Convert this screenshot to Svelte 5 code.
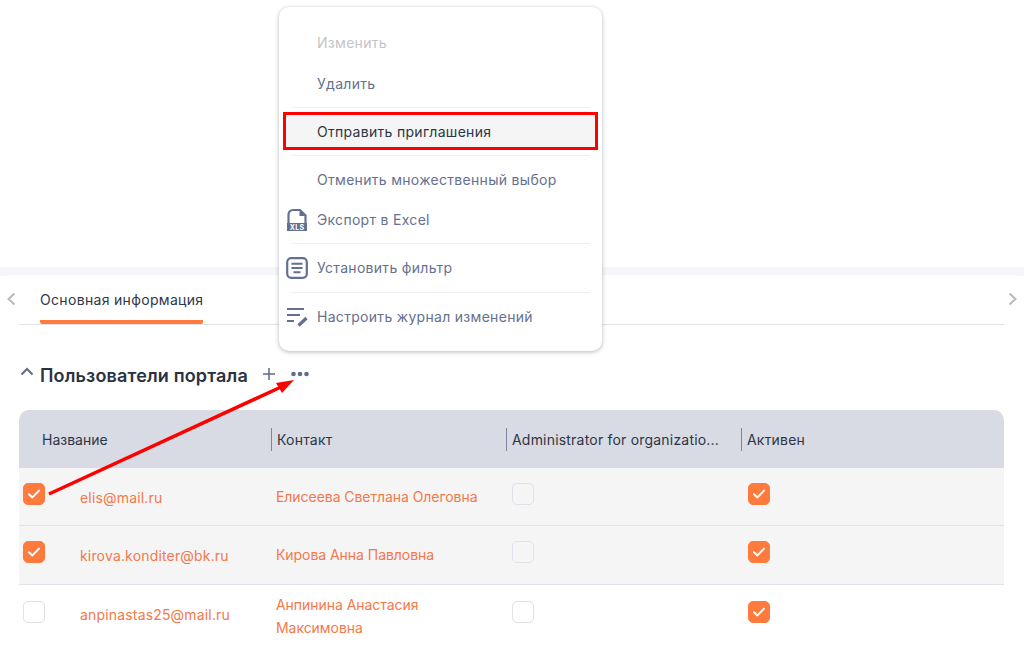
<script>
  const rows = [
    { email: 'elis@mail.ru', contact: ['Елисеева Светлана Олеговна'], checked: true, shade: true },
    { email: 'kirova.konditer@bk.ru', contact: ['Кирова Анна Павловна'], checked: true, shade: true },
    { email: 'anpinastas25@mail.ru', contact: ['Анпинина Анастасия', 'Максимовна'], checked: false, shade: false }
  ];
</script>

{#snippet box(on)}
  <span class="box" class:on>
    {#if on}
      <svg width="14" height="12" viewBox="0 0 14 12"><path d="M2 6.200 5.400 9.400 12 2.600" fill="none" stroke="#fff" stroke-width="2" stroke-linecap="round" stroke-linejoin="round"/></svg>
    {/if}
  </span>
{/snippet}

<div class="page">
  <div class="top"></div>
  <div class="strip"></div>
  <main class="card">
    <div class="tabs">
      <svg class="chev" width="12" height="16" viewBox="0 0 12 16"><path d="M9.500 2.500 3.500 8l6 5.500" fill="none" stroke="#b9b9bd" stroke-width="2"/></svg>
      <div class="tabline">
        <div class="tab">Основная информация</div>
      </div>
      <svg class="chev" width="12" height="16" viewBox="0 0 12 16"><path d="M2.500 2.500 8.500 8l-6 5.500" fill="none" stroke="#b9b9bd" stroke-width="2"/></svg>
    </div>

    <div class="section">
      <svg class="collapse" width="14" height="9" viewBox="0 0 14 9"><path d="M1.500 7.500 7 2l5.500 5.500" fill="none" stroke="#5f6b8a" stroke-width="2"/></svg>
      <h2>Пользователи портала</h2>
      <svg class="plus" width="14" height="14" viewBox="0 0 14 14"><path d="M7 1v12M1 7h12" stroke="#5f6b8a" stroke-width="1.500"/></svg>
      <svg class="dots" width="18" height="6" viewBox="0 0 18 6"><circle cx="2.500" cy="3" r="2.300" fill="#5f6b8a"/><circle cx="9" cy="3" r="2.300" fill="#5f6b8a"/><circle cx="15.500" cy="3" r="2.300" fill="#5f6b8a"/></svg>
    </div>

    <div class="table">
      <div class="row head">
        <div class="cell first">Название</div>
        <div class="cell sep">Контакт</div>
        <div class="cell sep">Administrator for organizatio...</div>
        <div class="cell sep">Активен</div>
      </div>
      {#each rows as r}
        <div class="row body" class:shade={r.shade}>
          <div class="cell name">
            <span class="slot">{@render box(r.checked)}</span>
            <span class="link email">{r.email}</span>
          </div>
          <div class="cell contact link">
            {#each r.contact as line}<div>{line}</div>{/each}
          </div>
          <div class="cell check">{@render box(false)}</div>
          <div class="cell check">{@render box(true)}</div>
        </div>
      {/each}
    </div>
  </main>

  <div class="menu">
    <div class="item disabled">Изменить</div>
    <div class="item second">Удалить</div>
    <hr class="h1" />
    <div class="item selected">Отправить приглашения</div>
    <hr class="h2" />
    <div class="item">Отменить множественный выбор</div>
    <div class="item">
      <svg class="ico" width="22" height="24" viewBox="0 0 22 24">
        <path d="M2.500 15V6.500A4.500 4.500 0 0 1 7 2h7l5.500 5.500V15" fill="none" stroke="#64708f" stroke-width="2.200"/>
        <path d="M13.500 2.500v5.500h6z" fill="#64708f"/>
        <rect x="1" y="15" width="20" height="8" fill="#64708f"/>
        <text x="11" y="21.700" text-anchor="middle" class="xls">XLS</text>
      </svg>
      Экспорт в Excel
    </div>
    <hr class="h3" />
    <div class="item">
      <svg class="ico" width="22" height="22" viewBox="0 0 22 22">
        <rect x="1.200" y="1.200" width="19.600" height="19.600" rx="4" fill="none" stroke="#64708f" stroke-width="2.200"/>
        <path d="M5.500 6.800h11M5.500 11h11M7.500 15.200h7" stroke="#64708f" stroke-width="2"/>
      </svg>
      Установить фильтр
    </div>
    <hr class="h4" />
    <div class="item">
      <svg class="ico" width="22" height="20" viewBox="0 0 22 20">
        <path d="M1 2h17M1 8h13M1 14h7" stroke="#64708f" stroke-width="2"/>
        <path d="M12.500 18.500 20.500 11" stroke="#64708f" stroke-width="3.200"/>
      </svg>
      Настроить журнал изменений
    </div>
  </div>

  <div class="redbox"></div>

  <svg class="arrow" width="1024" height="648" viewBox="0 0 1024 648">
    <path d="M49 494 281 387" stroke="#ff0000" stroke-width="3.500"/>
    <path d="M294 380 276 383 282 393z" fill="#ff0000"/>
  </svg>
</div>

<style>
  :global(body) {
    margin: 0;
    background: #fff;
    font-family: Inter, "Noto Sans", sans-serif;
  }
  .page {
    position: relative;
    width: 1024px;
    height: 648px;
    overflow: hidden;
    font-size: 14px;
    color: #2b3242;
  }
  .top { height: 267px; }
  .strip { height: 9px; background: #f5f6fa; }
  .card {
    background: #fff;
    border-radius: 10px 10px 0 0;
    margin-top: -1px;
    padding-top: 1px;
    height: 372px;
  }
  .tabs {
    display: flex;
    align-items: flex-start;
    padding-top: 1px;
    height: 49px;
  }
  .chev { flex: none; margin: 14px 0 0 5px; }
  .chev:last-child { margin: 14px 5px 0 3px; }
  .tabline {
    flex: 1;
    margin-left: 2px;
    height: 47px;
    border-bottom: 1px solid #dfe2ea;
    padding-left: 21px;
  }
  .tab {
    height: 43px;
    line-height: 45px;
    border-bottom: 4px solid #ff7a3d;
    border-radius: 0 0 2px 2px;
    color: #2f3747;
    width: 163px;
    white-space: nowrap;
    letter-spacing: 0.32px;
  }
  .section {
    display: flex;
    align-items: center;
    height: 30px;
    margin-top: 33px;
    padding-left: 20px;
  }
  .collapse { margin-top: -6px; }
  h2 {
    margin: 2px 0 0 6px;
    font-size: 18px;
    font-weight: 600;
    color: #2a3142;
    letter-spacing: 0.15px;
    width: 208px;
    white-space: nowrap;
  }
  .plus { margin-left: 14px; }
  .dots { margin-left: 15px; }

  .table { margin: 21px 20px 0 19px; }
  .row {
    display: grid;
    grid-template-columns: 252px 235px 235px 1fr;
  }
  .head {
    height: 58px;
    background: #d8dbe3;
    border-radius: 10px 10px 0 0;
    align-items: center;
    color: #2e3545;
  }
  .first { padding-left: 23px; }
  .sep {
    height: 23px;
    line-height: 23px;
    border-left: 1px solid #7d869e;
    padding-left: 5px;
    white-space: nowrap;
    letter-spacing: 0.2px;
  }
  .body {
    height: 58px;
    box-sizing: border-box;
    border-bottom: 1px solid #e0e2e9;
  }
  .body + .body { height: 59px; }
  .body:last-child { border-bottom: 0; height: 64px; }
  .body:last-child .box { margin-top: 1px; }
  .shade { background: #f5f5f6; }
  .link { color: #f4784a; }
  .name { position: relative; padding-left: 4px; }
  .slot { display: block; padding-top: 15px; }
  .email {
    position: absolute;
    left: 61px;
    top: 20px;
    line-height: 20px;
    letter-spacing: 0.17px;
    white-space: nowrap;
  }
  .contact {
    align-self: center;
    padding-left: 5px;
    line-height: 23px;
    letter-spacing: -0.05px;
  }
  .body + .body .contact { margin-top: -2px; }
  .body:last-child .contact { align-self: start; margin-top: 0; padding-top: 8px; }
  .check { padding: 15px 0 0 6px; display: flex; align-items: flex-start; }
  .check:last-child { padding-left: 7px; }
  .box {
    width: 22px;
    height: 22px;
    box-sizing: border-box;
    border-radius: 5px;
    border: 1px solid #dfe1e9;
    display: flex;
    align-items: center;
    justify-content: center;
  }
  .box.on { background: #ff7a3d; border-color: #ff7a3d; }

  .menu {
    position: absolute;
    left: 279px;
    top: 7px;
    width: 323px;
    height: 344px;
    box-sizing: border-box;
    background: #fff;
    border-radius: 10px;
    box-shadow: 0 1px 4px rgba(40, 45, 60, 0.35);
    padding: 16px 5px 0;
    color: #65718f;
  }
  .item {
    position: relative;
    height: 40px;
    line-height: 40px;
    padding-left: 33px;
    white-space: nowrap;
    letter-spacing: 0.3px;
  }
  .second { margin-top: 1px; }
  .disabled { color: #c4c4c6; }
  .selected { height: 36px; line-height: 38px; background: #f5f5f6; color: #2e3545; }
  hr {
    border: 0;
    height: 1px;
    background: #eeeff3;
    margin: 3px 7px 4px;
  }
  .h1 { margin-bottom: 5px; }
  .h2 { margin-top: 6px; }
  .h4 { margin-top: 4px; }
  .ico { position: absolute; left: 2px; top: 50%; transform: translateY(-50%); }
  .xls { font: 700 7px Inter, sans-serif; fill: #fff; }

  .redbox {
    position: absolute;
    left: 283px;
    top: 112px;
    width: 315px;
    height: 38px;
    box-sizing: border-box;
    border: 3px solid #ff0000;
  }
  .arrow { position: absolute; left: 0; top: 0; pointer-events: none; }
</style>
